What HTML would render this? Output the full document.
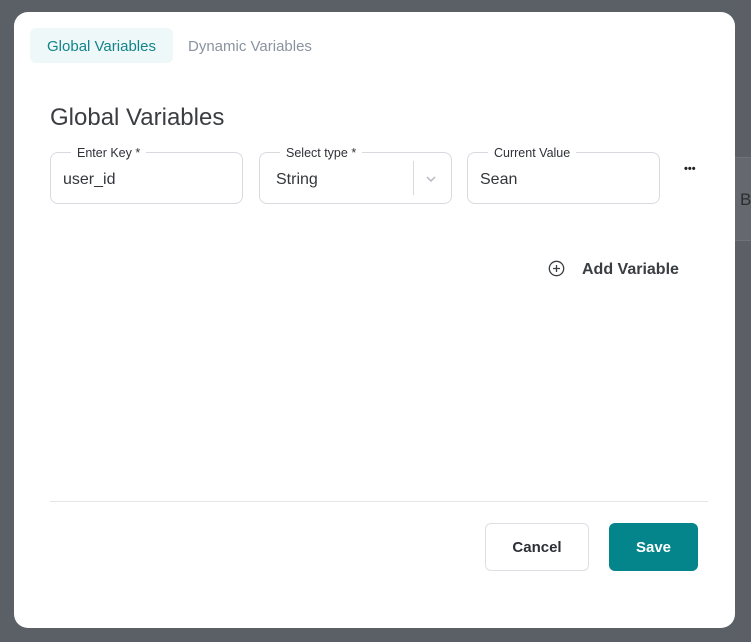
<!DOCTYPE html>
<html><head><style>
*{margin:0;padding:0;box-sizing:border-box}
body{width:751px;height:642px;background:#5b5f66;font-family:"Liberation Sans",sans-serif;position:relative;overflow:hidden}
.side{position:absolute;left:734px;top:157px;width:20px;height:84px;background:#65696f;border-top:1px solid #6f7379;border-bottom:1px solid #6f7379}
.side span{position:absolute;left:6px;top:32px;color:#2b2d31;font-size:17px}
.modal{position:absolute;left:14px;top:12px;width:721px;height:616px;background:#fff;border-radius:14px}
.tab1{position:absolute;left:16px;top:16px;width:143px;height:35px;background:#eff8f9;border-radius:6px;color:#12848a;font-size:15px;line-height:37px;text-align:center}
.tab2{position:absolute;left:174px;top:16px;color:#8a93a0;font-size:15px;line-height:37px}
h1{position:absolute;left:36px;top:92px;font-size:24px;font-weight:normal;color:#3b3d42}
.f{position:absolute;top:140px;height:52px;border:1px solid #d7dadf;border-radius:8px}
.f label{position:absolute;top:-7px;left:20px;background:#fff;padding:0 6px;font-size:12.5px;color:#2f3238;line-height:14px}
.f .v{position:absolute;left:0;top:18px;font-size:16px;color:#33363b}
.dots{position:absolute;left:670px;top:151px;font-size:11px;color:#222;font-weight:bold}
.add{position:absolute;left:534px;top:249px;font-size:16px;font-weight:bold;color:#3a3d42}
.add svg{position:absolute;left:0;top:-1px}
.add span{position:absolute;left:34px;top:0;white-space:nowrap}
.sep{position:absolute;left:36px;top:489px;width:658px;height:1px;background:#e3e5e8}
.btn{position:absolute;top:511px;height:48px;border-radius:6px;font-size:15px;font-weight:bold;line-height:50px;text-align:center}
</style></head><body>
<div class="side"><span>B</span></div>
<div class="modal">
<div class="tab1">Global Variables</div>
<div class="tab2">Dynamic Variables</div>
<h1>Global Variables</h1>
<div class="f" style="left:36px;width:193px"><label>Enter Key *</label><div class="v" style="left:12px">user_id</div></div>
<div class="f" style="left:245px;width:193px"><label>Select type *</label><div class="v" style="left:16px">String</div>
<div style="position:absolute;left:153px;top:8px;width:1px;height:34px;background:#d7dadf"></div>
<svg style="position:absolute;left:165px;top:22px" width="12" height="8" viewBox="0 0 12 8"><path d="M2 2l4 4 4-4" fill="none" stroke="#b6bac0" stroke-width="1.5"/></svg></div>
<div class="f" style="left:453px;width:193px"><label>Current Value</label><div class="v" style="left:12px">Sean</div></div>
<div class="dots">•••</div>
<div class="add"><svg width="17" height="17" viewBox="0 0 17 17"><circle cx="8.5" cy="8.5" r="7.2" fill="none" stroke="#3a3d42" stroke-width="1.3"/><path d="M8.5 5v7M5 8.5h7" stroke="#3a3d42" stroke-width="1.3"/></svg><span>Add Variable</span></div>
<div class="sep"></div>
<div class="btn" style="left:471px;width:104px;border:1px solid #dcdfe3;color:#2b2f36;line-height:48px">Cancel</div>
<div class="btn" style="left:595px;width:89px;background:#03858b;color:#fff">Save</div>
</div>
</body></html>
